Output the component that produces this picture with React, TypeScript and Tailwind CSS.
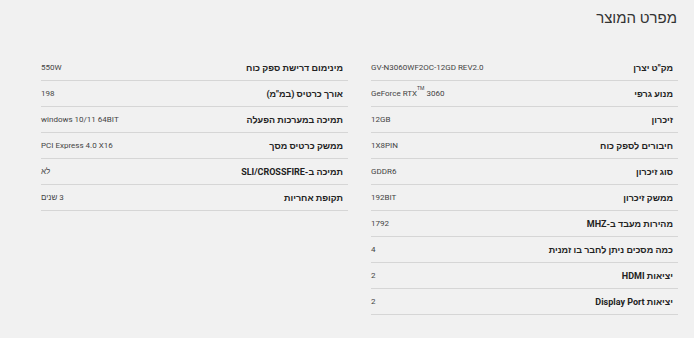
import React from "react";

type Spec = { label: React.ReactNode; value: React.ReactNode };

const rightSpecs: Spec[] = [
  { label: "מק\"ט יצרן", value: "GV-N3060WF2OC-12GD REV2.0" },
  {
    label: "מנוע גרפי",
    value: (
      <>
        GeForce RTX<sup className="text-[5px] align-super">TM</sup> 3060
      </>
    ),
  },
  { label: "זיכרון", value: "12GB" },
  { label: "חיבורים לספק כוח", value: "1X8PIN" },
  { label: "סוג זיכרון", value: "GDDR6" },
  { label: "ממשק זיכרון", value: "192BIT" },
  { label: "מהירות מעבד ב-MHZ", value: "1792" },
  { label: "כמה מסכים ניתן לחבר בו זמנית", value: "4" },
  { label: "יציאות HDMI", value: "2" },
  { label: "יציאות Display Port", value: "2" },
];

const leftSpecs: Spec[] = [
  { label: "מינימום דרישת ספק כוח", value: "550W" },
  { label: "אורך כרטיס (במ\"מ)", value: "198" },
  { label: "תמיכה במערכות הפעלה", value: "windows 10/11 64BIT" },
  { label: "ממשק כרטיס מסך", value: "PCI Express 4.0 X16" },
  { label: "תמיכה ב-SLI/CROSSFIRE", value: "לא" },
  { label: "תקופת אחריות", value: "3 שנים" },
];

const SpecTable = ({ specs }: { specs: Spec[] }) => (
  <div className="flex flex-col">
    {specs.map((s, i) => (
      <div key={i} className="flex justify-between items-start h-[26px] border-b border-[#d6d6d6] pr-[5px]">
        <span className="text-[9px] leading-[14px] font-bold text-[#222] mt-[6px]">{s.label}</span>
        <span className="text-[8px] leading-[10px] text-[#444] mt-[8px]">{s.value}</span>
      </div>
    ))}
  </div>
);

export default function App() {
  return (
    <div
      dir="rtl"
      className="w-[694px] h-[338px] bg-[#f1f1f1] pr-[16px] pl-[41px] pt-[8px]"
      style={{ fontFamily: "Roboto, 'Liberation Sans', Arial, sans-serif" }}
    >
      <h2 className="text-[15px] leading-[20px] text-[#333] font-normal pr-[1px]">מפרט המוצר</h2>
      <div className="grid grid-cols-2 gap-x-[23px] mt-[27px]">
        <SpecTable specs={rightSpecs} />
        <SpecTable specs={leftSpecs} />
      </div>
    </div>
  );
}
